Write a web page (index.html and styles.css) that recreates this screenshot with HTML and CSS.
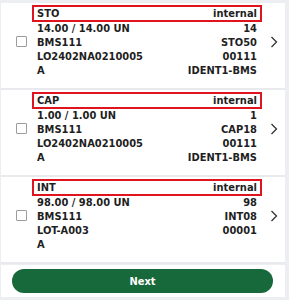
FILE: index.html
```html
<!DOCTYPE html>
<html lang="en">
<head>
  <meta charset="UTF-8">
  <meta name="viewport" content="width=device-width, initial-scale=1.0">
  <title>Picking list</title>
  <link rel="stylesheet" href="styles.css">
</head>
<body>
  <div class="panel">
    <!-- Lista delle righe -->
    <div class="item">
      <div class="check"><span class="box"></span></div>
      <div class="info">
        <div class="row head"><span>STO</span><span>internal</span></div>
        <div class="row"><span>14.00 / 14.00 UN</span><span>14</span></div>
        <div class="row"><span>BMS111</span><span>STO50</span></div>
        <div class="row"><span>LO2402NA0210005</span><span>00111</span></div>
        <div class="row"><span>A</span><span>IDENT1-BMS</span></div>
      </div>
      <div class="go">
        <svg width="8" height="12" viewBox="0 0 8 12"><path d="M1.5 1 L6.5 6 L1.5 11" fill="none" stroke="#333" stroke-width="1.3"/></svg>
      </div>
    </div>

    <div class="item">
      <div class="check"><span class="box"></span></div>
      <div class="info">
        <div class="row head"><span>CAP</span><span>internal</span></div>
        <div class="row"><span>1.00 / 1.00 UN</span><span>1</span></div>
        <div class="row"><span>BMS111</span><span>CAP18</span></div>
        <div class="row"><span>LO2402NA0210005</span><span>00111</span></div>
        <div class="row"><span>A</span><span>IDENT1-BMS</span></div>
      </div>
      <div class="go">
        <svg width="8" height="12" viewBox="0 0 8 12"><path d="M1.5 1 L6.5 6 L1.5 11" fill="none" stroke="#333" stroke-width="1.3"/></svg>
      </div>
    </div>

    <div class="item">
      <div class="check"><span class="box"></span></div>
      <div class="info">
        <div class="row head"><span>INT</span><span>internal</span></div>
        <div class="row"><span>98.00 / 98.00 UN</span><span>98</span></div>
        <div class="row"><span>BMS111</span><span>INT08</span></div>
        <div class="row"><span>LOT-A003</span><span>00001</span></div>
        <div class="row"><span>A</span><span></span></div>
      </div>
      <div class="go">
        <svg width="8" height="12" viewBox="0 0 8 12"><path d="M1.5 1 L6.5 6 L1.5 11" fill="none" stroke="#333" stroke-width="1.3"/></svg>
      </div>
    </div>

    <!-- Pulsante in fondo -->
    <div class="footer">
      <button class="btn">Next</button>
    </div>
  </div>
</body>
</html>
```

FILE: styles.css
```css
* { margin: 0; padding: 0; box-sizing: border-box; }
body {
  background: #eceef1;
  font-family: "DejaVu Sans Condensed", "Liberation Sans", sans-serif;
  font-size: 11px;
  font-weight: bold;
  color: #1f1f1f;
}

/* Contenitore bianco */
.panel {
  margin: 3px 4px 0 1px;
  background: #fff;
}

/* Singola riga della lista */
.item {
  display: flex;
  align-items: center;
  padding: 2px 0 10px;
  border-bottom: 2px solid #e8eaed;
}

.check {
  width: 31px;
  padding-left: 15px;
  display: flex;
}

.box {
  width: 11px;
  height: 11px;
  border: 1px solid #9a9ca0;
  border-radius: 1px;
}

.info {
  width: 230px;
}

.row {
  display: flex;
  justify-content: space-between;
  line-height: 14px;
  padding: 0 5px;
}

.row.head {
  border: 2px solid #e0141e;
  padding: 0 3px;
  line-height: 13px;
}

.go {
  flex: 1;
  display: flex;
  justify-content: center;
}

/* Pulsante */
.footer {
  padding: 4px 12px 4px 11px;
  border-top: 1px solid #eceef1;
}

.btn {
  display: block;
  width: 100%;
  height: 24px;
  border: none;
  border-radius: 12px;
  background: #17683b;
  color: #fff;
  font-family: inherit;
  font-size: 11px;
  font-weight: bold;
}
```
